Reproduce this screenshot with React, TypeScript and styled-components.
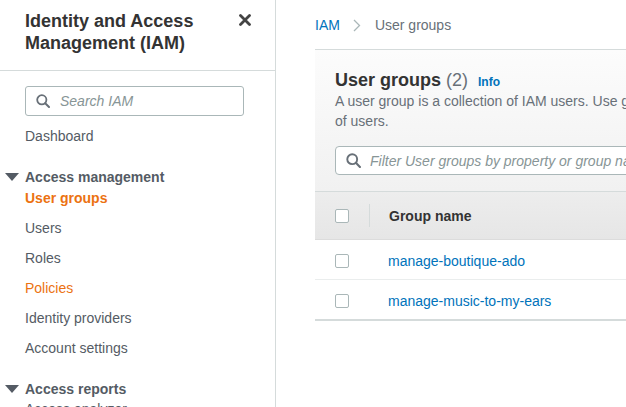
import React from "react";
import styled, { createGlobalStyle } from "styled-components";

const Global = createGlobalStyle`
  html, body { margin: 0; padding: 0; background: #fff; overflow: hidden; }
  body { font-family: "Liberation Sans", Arial, Helvetica, sans-serif; -webkit-font-smoothing: antialiased; }
  * { box-sizing: border-box; }
`;

const Page = styled.div`
  display: flex;
  width: 626px;
  height: 407px;
  overflow: hidden;
`;

const Sidebar = styled.aside`
  flex: 0 0 276px;
  border-right: 1px solid #d5dbdb;
  display: flex;
  flex-direction: column;
  overflow: hidden;
`;

const SideHeader = styled.div`
  flex-shrink: 0;
  height: 71px;
  border-bottom: 1px solid #d5dbdb;
  padding: 10px 24px 0 25px;
  display: flex;
  justify-content: space-between;
  align-items: flex-start;
`;

const SideTitle = styled.h1`
  margin: 0;
  font-size: 18px;
  line-height: 22px;
  font-weight: 700;
  color: #333;
`;

const CloseButton = styled.button`
  border: 0;
  background: none;
  padding: 0;
  margin-top: 4px;
  width: 12px;
  height: 12px;
  display: flex;
  color: #444;
`;

const Nav = styled.nav`
  flex-shrink: 0;
  padding: 15px 0 0 0;
  display: flex;
  flex-direction: column;
`;

const SearchBox = styled.div`
  flex-shrink: 0;
  margin: 0 31px 0 25px;
  height: 30px;
  border: 1px solid #aab7b8;
  border-radius: 3px;
  display: flex;
  align-items: center;
  padding-left: 10px;
  gap: 10px;
  margin-bottom: 10px;
`;

const Placeholder = styled.span`
  font-size: 14px;
  font-style: italic;
  color: #879596;
  white-space: nowrap;
`;

const NavLink = styled.a<{ $active?: boolean; $bold?: boolean; $gap?: number }>`
  display: block;
  flex-shrink: 0;
  padding-left: 25px;
  font-size: 14px;
  line-height: 20px;
  margin-top: ${(p) => (p.$gap ?? 10)}px;
  color: ${(p) => (p.$active ? "#ec7211" : "#545b64")};
  font-weight: ${(p) => (p.$bold ? 700 : 400)};
  text-decoration: none;
  white-space: nowrap;
`;

const SectionTitle = styled.div`
  display: flex;
  flex-shrink: 0;
  align-items: center;
  margin-top: 21px;
  padding-left: 5px;
  gap: 6px;
  font-size: 14px;
  line-height: 20px;
  font-weight: 700;
  color: #545b64;
  white-space: nowrap;
`;

const Main = styled.main`
  flex: 1;
  min-width: 0;
  overflow: hidden;
  padding-left: 39px;
`;

const Breadcrumbs = styled.div`
  display: flex;
  align-items: center;
  height: 49px;
  padding-top: 1px;
  font-size: 14px;
  white-space: nowrap;
`;

const Crumb = styled.a<{ $current?: boolean }>`
  color: ${(p) => (p.$current ? "#687078" : "#0073bb")};
  text-decoration: none;
`;

const CrumbSep = styled.span`
  display: flex;
  margin: 0 14px 0 13px;
`;

const Container = styled.section`
  width: 760px;
  border-top: 1px solid #d5dbdb;
`;

const ContainerHeader = styled.div`
  background: linear-gradient(#fcfcfc, #f1f1f1);
  padding: 20px 20px 16px 20px;
`;

const Heading = styled.h2`
  margin: 0;
  font-size: 18px;
  line-height: 21px;
  height: 21px;
  font-weight: 700;
  color: #333;
  white-space: nowrap;
`;

const Count = styled.span`
  font-weight: 400;
  color: #687078;
  margin-left: 5px;
`;

const InfoLink = styled.a`
  font-size: 12px;
  font-weight: 700;
  color: #0073bb;
  margin-left: 10px;
  text-decoration: none;
`;

const Description = styled.p`
  margin: 0;
  font-size: 14px;
  line-height: 20px;
  color: #687078;
  white-space: nowrap;
`;

const FilterBox = styled.div`
  margin-top: 15px;
  height: 29px;
  border: 1px solid #aab7b8;
  border-radius: 4px;
  background: #fff;
  display: flex;
  align-items: center;
  padding-left: 10px;
  gap: 9px;
`;

const Table = styled.div`
  display: grid;
  grid-template-columns: 54px 1fr;
`;

const HeadCell = styled.div<{ $divider?: boolean }>`
  height: 49px;
  background: linear-gradient(#ededed, #e6e6e6);
  border-top: 1px solid #d5dbdb;
  border-bottom: 1px solid #dcdcdc;
  display: flex;
  align-items: center;
  padding-left: 20px;
  position: relative;
  font-size: 14px;
  font-weight: 700;
  color: #333;
  ${(p) =>
    p.$divider
      ? `&::before { content: ""; position: absolute; left: 0; top: 12px; bottom: 12px; width: 1px; background: #d5dbdb; }`
      : ""}
`;

const Cell = styled.div<{ $last?: boolean }>`
  height: ${(p) => (p.$last ? "41px" : "40px")};
  display: flex;
  align-items: center;
  padding-left: 20px;
  padding-top: 2px;
  border-bottom: ${(p) => (p.$last ? "2px solid #d5dbdb" : "1px solid #eaeded")};
  font-size: 14px;
`;

const NameCell = styled(Cell)`
  padding-left: 19px;
`;

const RowLink = styled.a`
  color: #0073bb;
  text-decoration: none;
  white-space: nowrap;
`;

const Checkbox = styled.span`
  display: block;
  width: 14px;
  height: 14px;
  border: 1px solid #aab7b8;
  border-radius: 2px;
  background: #fff;
`;

const SearchIcon = ({ size = 14 }: { size?: number }) => (
  <svg width={size} height={size} viewBox="0 0 14 14" fill="none">
    <circle cx="5.8" cy="5.8" r="4.6" stroke="#687078" strokeWidth="1.8" />
    <path d="M9.2 9.2L13 13" stroke="#687078" strokeWidth="2" strokeLinecap="round" />
  </svg>
);

const Caret = () => (
  <svg width="14" height="8" viewBox="0 0 14 8">
    <path d="M0 0H14L7 8Z" fill="#545b64" />
  </svg>
);

const groups = ["manage-boutique-ado", "manage-music-to-my-ears"];

export default function App() {
  return (
    <>
      <Global />
      <Page>
        <Sidebar>
          <SideHeader>
            <SideTitle>
              Identity and Access
              <br />
              Management (IAM)
            </SideTitle>
            <CloseButton aria-label="Close">
              <svg width="12" height="12" viewBox="0 0 12 12">
                <path d="M1.5 1.5L10.5 10.5M10.5 1.5L1.5 10.5" stroke="#444" strokeWidth="2.8" strokeLinecap="round" />
              </svg>
            </CloseButton>
          </SideHeader>
          <Nav>
            <SearchBox>
              <SearchIcon />
              <Placeholder>Search IAM</Placeholder>
            </SearchBox>
            <NavLink $gap={0}>Dashboard</NavLink>
            <SectionTitle>
              <Caret />
              Access management
            </SectionTitle>
            <NavLink $gap={1} $active $bold>User groups</NavLink>
            <NavLink>Users</NavLink>
            <NavLink>Roles</NavLink>
            <NavLink $active>Policies</NavLink>
            <NavLink>Identity providers</NavLink>
            <NavLink>Account settings</NavLink>
            <SectionTitle>
              <Caret />
              Access reports
            </SectionTitle>
            <NavLink $gap={0}>Access analyzer</NavLink>
          </Nav>
        </Sidebar>
        <Main>
          <Breadcrumbs>
            <Crumb>IAM</Crumb>
            <CrumbSep>
              <svg width="8" height="13" viewBox="0 0 8 13">
                <path d="M1 1L6.5 6.5L1 12" stroke="#aab7b8" strokeWidth="1.3" fill="none" />
              </svg>
            </CrumbSep>
            <Crumb $current>User groups</Crumb>
          </Breadcrumbs>
          <Container>
            <ContainerHeader>
              <Heading>
                User groups<Count>(2)</Count>
                <InfoLink>Info</InfoLink>
              </Heading>
              <Description>
                A user group is a collection of IAM users. Use groups to specify permissions for a collection
                <br />
                of users.
              </Description>
              <FilterBox>
                <SearchIcon size={15} />
                <Placeholder>Filter User groups by property or group name and press enter</Placeholder>
              </FilterBox>
            </ContainerHeader>
            <Table>
              <HeadCell>
                <Checkbox />
              </HeadCell>
              <HeadCell $divider>Group name</HeadCell>
              {groups.map((g, i) => (
                <React.Fragment key={g}>
                  <Cell $last={i === groups.length - 1}>
                    <Checkbox />
                  </Cell>
                  <NameCell $last={i === groups.length - 1}>
                    <RowLink>{g}</RowLink>
                  </NameCell>
                </React.Fragment>
              ))}
            </Table>
          </Container>
        </Main>
      </Page>
    </>
  );
}
